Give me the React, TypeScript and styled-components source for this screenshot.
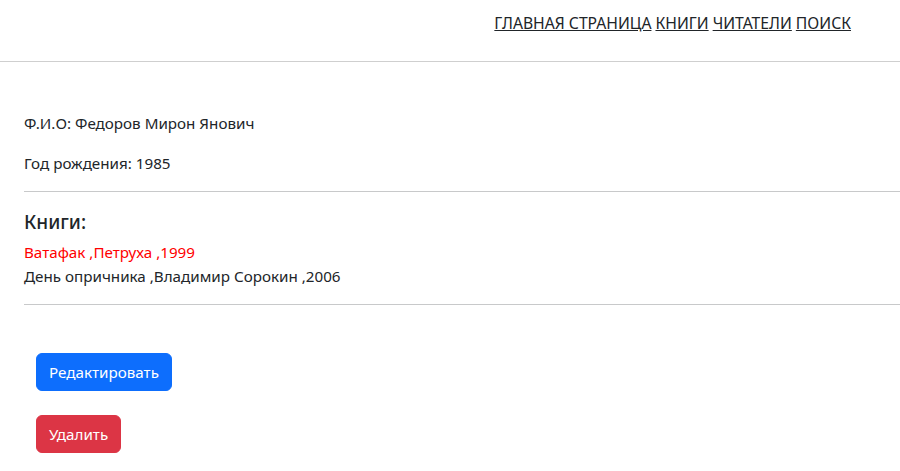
import React from "react";
import styled, { createGlobalStyle } from "styled-components";

const Global = createGlobalStyle`
  html, body { margin: 0; padding: 0; background: #fff; }
  body {
    font-family: "Segoe UI", "Noto Sans", "Liberation Sans", sans-serif;
    font-size: 15.2px;
    line-height: 24px;
    color: #212529;
  }
`;

const Header = styled.header`
  height: 62px;
  border-bottom: 1px solid #cfcfcf;
  display: flex;
  justify-content: flex-end;
  align-items: flex-start;
  padding: 11px 49px 0 0;
  box-sizing: border-box;
`;

const Nav = styled.nav`
  display: flex;
  gap: 4px;
`;

const NavLink = styled.a`
  color: #212529;
  text-decoration: underline;
  font-size: 15.7px;
`;

const Main = styled.main`
  padding: 49px 0 0 24px;
`;

const Para = styled.p`
  margin: 0 0 16px;
`;

const Rule = styled.hr<{ $mt: number; $mb: number }>`
  border: 0;
  border-top: 1px solid #c8c9ca;
  margin: ${(p) => `${p.$mt}px 0 ${p.$mb}px`};
`;

const Heading = styled.h3`
  font-size: 19px;
  font-weight: 500;
  margin: 0 0 6px;
  line-height: 24px;
`;

const BookLine = styled.div<{ $red?: boolean }>`
  color: ${(p) => (p.$red ? "#ff0000" : "#212529")};
`;

const Actions = styled.div`
  display: flex;
  flex-direction: column;
  align-items: flex-start;
  gap: 24px;
  padding: 48px 0 0 36px;
`;

const Button = styled.button<{ $variant: "primary" | "danger" }>`
  font-family: inherit;
  font-size: 15.2px;
  line-height: 24px;
  color: #fff;
  border: 1px solid ${(p) => (p.$variant === "primary" ? "#0d6efd" : "#dc3545")};
  background: ${(p) => (p.$variant === "primary" ? "#0d6efd" : "#dc3545")};
  border-radius: 6px;
  padding: 6px 12px;
  cursor: pointer;
`;

export default function App() {
  return (
    <>
      <Global />
      <Header>
        <Nav>
          <NavLink href="#">ГЛАВНАЯ СТРАНИЦА</NavLink>
          <NavLink href="#">КНИГИ</NavLink>
          <NavLink href="#">ЧИТАТЕЛИ</NavLink>
          <NavLink href="#">ПОИСК</NavLink>
        </Nav>
      </Header>
      <Main>
        <Para>Ф.И.О: Федоров Мирон Янович</Para>
        <Para>Год рождения: 1985</Para>
        <Rule $mt={0} $mb={18} />
        <Heading>Книги:</Heading>
        <BookLine $red>Ватафак ,Петруха ,1999</BookLine>
        <BookLine>День опричника ,Владимир Сорокин ,2006</BookLine>
        <Rule $mt={16} $mb={0} />
      </Main>
      <Actions>
        <Button $variant="primary">Редактировать</Button>
        <Button $variant="danger">Удалить</Button>
      </Actions>
    </>
  );
}
